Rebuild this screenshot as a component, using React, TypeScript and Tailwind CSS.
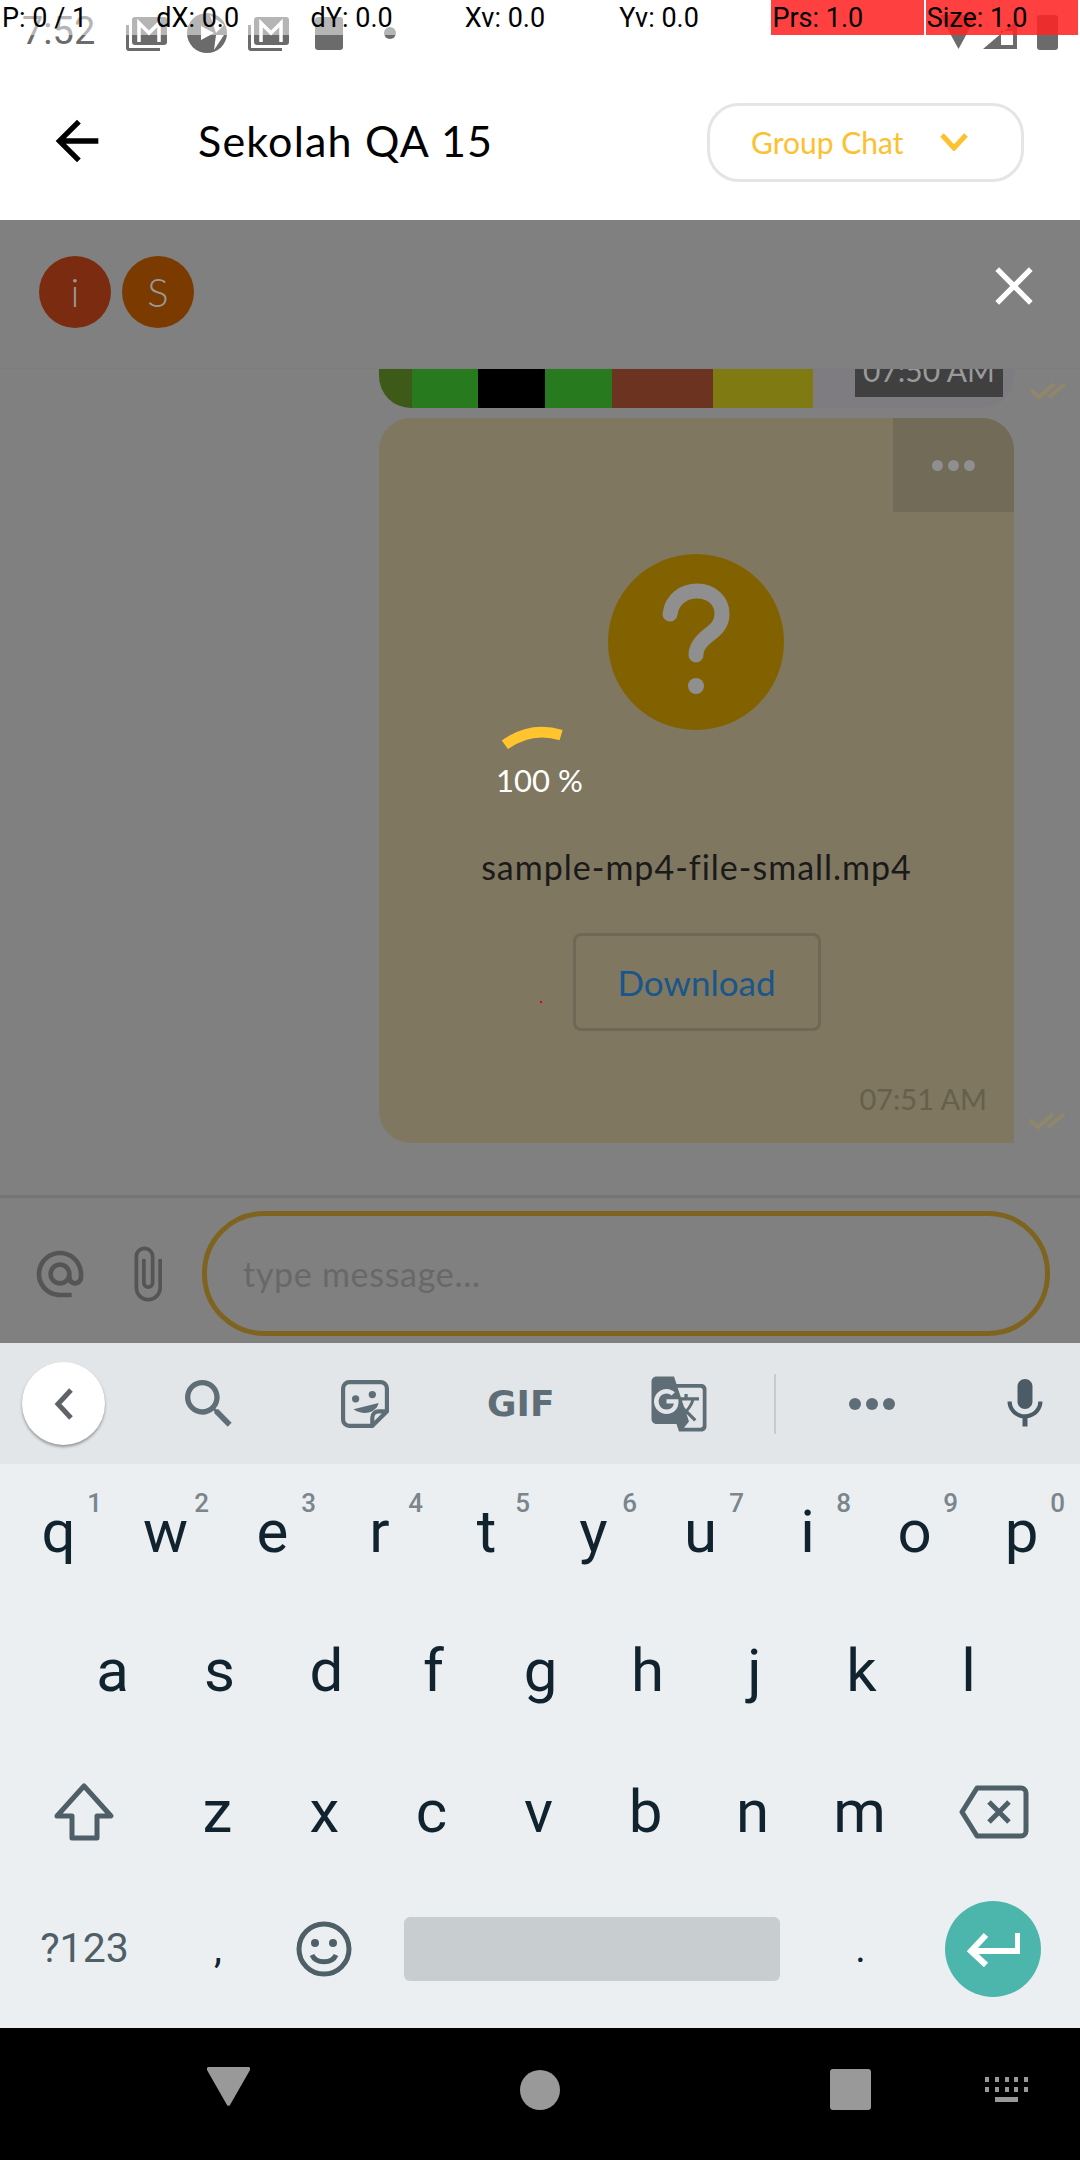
import { MdArrowBack, MdClose, MdSearch, MdMic, MdAlternateEmail, MdAttachFile, MdGTranslate } from 'react-icons/md';

const debugCols = ['P: 0 / 1', 'dX: 0.0', 'dY: 0.0', 'Xv: 0.0', 'Yv: 0.0', 'Prs: 1.0', 'Size: 1.0'];
const row1 = [['q', '1'], ['w', '2'], ['e', '3'], ['r', '4'], ['t', '5'], ['y', '6'], ['u', '7'], ['i', '8'], ['o', '9'], ['p', '0']];
const row2 = ['a', 's', 'd', 'f', 'g', 'h', 'j', 'k', 'l'];
const row3 = ['z', 'x', 'c', 'v', 'b', 'n', 'm'];

const MailIcon = () => (
  <svg width="41" height="34" viewBox="0 0 41 34" fill="#6b6b6b">
    <path d="M0 8h3v23h31v3H3a3 3 0 0 1-3-3z" />
    <path d="M9 0h29a3 3 0 0 1 3 3v22a3 3 0 0 1-3 3H9a3 3 0 0 1-3-3V3a3 3 0 0 1 3-3z" />
    <path d="M13 25V6l10 10L33 6v19" fill="none" stroke="#fff" strokeWidth="3.500" />
  </svg>
);

const Ticks = () => (
  <svg width="36" height="18" viewBox="0 0 36 18" fill="none" stroke="#90866a" strokeWidth="4">
    <path d="M1 8l8 7L24 2" />
    <path d="M19 15L35 2" />
  </svg>
);

function Key({ label, hint }: { label: string; hint?: string }) {
  return (
    <div className="relative w-[107px] h-full flex justify-center items-center text-[60px] text-[#10232f] font-[Roboto,sans-serif]">
      {label}
      {hint && <span className="absolute top-[26px] right-[10px] text-[26px] font-medium leading-none text-[#7a858c]">{hint}</span>}
    </div>
  );
}

export default function App() {
  return (
    <div className="relative w-[1080px] h-[2160px] overflow-hidden bg-white flex flex-col font-['Lato',sans-serif]">
      {/* pointer location debug overlay */}
      <div className="absolute top-0 left-0 w-full h-[35px] bg-white/50 grid grid-cols-7 z-10 font-[Roboto,sans-serif] text-[27px] leading-[37px] text-black">
        {debugCols.map((c, i) => (
          <div key={c} className={i > 4 ? 'h-[35px] bg-[#ff0000]/75 mr-[2px] pl-[1px]' : 'h-[35px] pl-[2px]'}>
            {c}
          </div>
        ))}
      </div>

      <div className="h-[62px] flex items-start pt-[13px] px-[22px] text-[#6b6b6b]">
        <span className="w-[104px] mt-[-2px] text-[38px] leading-[40px] font-[Roboto,sans-serif]">7:52</span>
        <div className="mt-[4px]"><MailIcon /></div>
        <svg className="ml-[19px]" width="42" height="40" viewBox="0 0 42 40" fill="#6b6b6b">
          <circle cx="21" cy="20" r="20" />
          <path d="M15 13l13 7-13 7z" fill="#fff" />
          <path d="M24 2l14 10-8 8z" fill="#fff" />
          <path d="M30 22l8 0-10 15z" fill="#fff" />
        </svg>
        <div className="ml-[20px] mt-[4px]"><MailIcon /></div>
        <div className="ml-[26px] mt-[4px] w-[28px] h-[33px] rounded-[3px] bg-[#6b6b6b]" />
        <div className="ml-[41px] mt-[14px] w-[12px] h-[12px] rounded-full bg-[#6b6b6b]" />
        <svg className="ml-auto mt-[2px]" width="37" height="34" viewBox="0 0 37 34" fill="#6b6b6b"><path d="M0 0h37L18.500 34z" /></svg>
        <svg className="ml-[6px] mt-[7px]" width="34" height="29" viewBox="0 0 34 29" fill="#6b6b6b"><path d="M34 0v29H0zM30 11l-12 0v14h12z" fillRule="evenodd" /></svg>
        <div className="ml-[20px] mt-[2px] w-[21px] h-[35px] rounded-[3px] bg-[#6b6b6b]" />
      </div>

      <header className="h-[158px] flex items-center pl-[45px] pr-[56px]">
        <MdArrowBack size={64} className="text-black" />
        <h1 className="ml-[89px] text-[43px] tracking-[1.2px] text-black">Sekolah QA 15</h1>
        <div className="ml-auto mt-[2px] w-[317px] h-[79px] rounded-[32px] border-[3px] border-[#e5e5e5] flex items-center pl-[41px] text-[30px] text-[#fdc02f]">
          Group Chat
          <svg className="ml-[37px]" width="28" height="18" viewBox="0 0 28 18" fill="none" stroke="#fdc02f" strokeWidth="5"><path d="M2 2l12 13L26 2" /></svg>
        </div>
      </header>

      <main className="flex-1 bg-[#808080] flex flex-col">
        <div className="h-[149px] flex items-start pt-[36px] pl-[39px] pr-[34px] border-b border-[#7d7d7d]">
          <div className="w-[72px] h-[72px] rounded-full bg-[#7b2b10] flex items-center justify-center text-[40px] font-light text-[#999]">i</div>
          <div className="ml-[11px] w-[72px] h-[72px] rounded-full bg-[#7a3a00] flex items-center justify-center text-[40px] font-light text-[#999]">S</div>
          <MdClose size={64} className="ml-auto mt-[-2px] text-white" />
        </div>

        <div className="flex-1 flex flex-col pl-[379px]">
          <div className="flex items-center">
            <div className="w-[635px] h-[39px] flex rounded-b-[32px] overflow-hidden bg-[#7e7c80]">
              <div className="w-[33px] bg-[#3e5a18]" />
              <div className="w-[66px] bg-[#287a1e]" />
              <div className="w-[67px] bg-black" />
              <div className="w-[67px] bg-[#287a1e]" />
              <div className="w-[101px] bg-[#6c3420]" />
              <div className="w-[100px] bg-[#807a12]" />
              <div className="ml-[42px] w-[148px] h-[28px] bg-[#404040] flex items-end justify-center text-[#9a9a9a] text-[30px] leading-none pb-[12px] whitespace-nowrap">07:50 AM</div>
            </div>
            <div className="ml-[16px] mt-[4px]"><Ticks /></div>
          </div>

          <div className="flex items-end mt-[10px]">
            <div className="relative w-[635px] h-[725px] rounded-[32px] rounded-br-none bg-[#7f7760] flex flex-col items-center">
              <div className="absolute top-0 right-0 w-[121px] h-[94px] rounded-tr-[32px] bg-[#716b58] flex items-center justify-center gap-[5px]">
                <span className="w-[11px] h-[11px] rounded-full bg-[#8f8f8f]" />
                <span className="w-[11px] h-[11px] rounded-full bg-[#8f8f8f]" />
                <span className="w-[11px] h-[11px] rounded-full bg-[#8f8f8f]" />
              </div>
              <div className="mt-[136px] mr-[2px] w-[176px] h-[176px] rounded-full bg-[#826200]">
                <svg width="176" height="176" viewBox="0 0 176 176" fill="none" stroke="#8f8f8f" strokeWidth="15" strokeLinecap="round">
                  <path d="M62 60C64 45 76 37 89 37c15 0 25 10 25 23 0 14-11 18-19 26-5 5-7 9-7 15" />
                  <circle cx="88" cy="132" r="8" fill="#8f8f8f" strokeWidth="0" />
                </svg>
              </div>
              {/* upload progress on top of the card */}
              <svg className="absolute left-[122px] top-[304px]" width="64" height="30" viewBox="0 0 66 30" fill="none" stroke="#ffc42e" strokeWidth="11">
                <path d="M4 23C22 10 42 7 62 13" />
              </svg>
              <span className="absolute left-[117px] top-[344px] text-[31px] leading-[36px] text-white">100 %</span>
              <p className="mt-[117px] text-[34px] tracking-[1px] leading-[40px] text-[#1a1a1a]">sample-mp4-file-small.mp4</p>
              <div className="mt-[46px] w-[248px] h-[98px] rounded-[8px] border-[3px] border-[#6e6854] flex items-center justify-center text-[35px] text-[#19568a]">Download</div>
              <span className="absolute right-[27px] bottom-[26px] text-[29px] leading-[36px] text-[#655f4b]">07:51 AM</span>
              <span className="absolute left-[161px] top-[583px] w-[2px] h-[2px] bg-red-600" />
            </div>
            <div className="ml-[15px] mb-[13px]"><Ticks /></div>
          </div>
        </div>

        <div className="h-[148px] border-t-[3px] border-[#757575] flex items-center pt-[6px] pl-[32px] pr-[30px]">
          <MdAlternateEmail size={56} className="text-[#555]" />
          <MdAttachFile size={60} className="ml-[29px] text-[#555]" />
          <div className="ml-[25px] flex-1 h-[125px] rounded-[62px] border-[5px] border-[#7f6420] flex items-center pl-[36px] text-[34px] tracking-[0.7px] text-[#686868]">type message...</div>
        </div>
      </main>

      <section className="bg-[#ebeff2] font-[Roboto,sans-serif]">
        <div className="h-[121px] bg-[#e2e6e9] flex items-center pl-[22px]">
          <div className="w-[83px] h-[83px] rounded-full bg-white shadow-[0_2px_3px_rgba(0,0,0,0.35)] flex items-center justify-center">
            <svg width="20" height="34" viewBox="0 0 20 34" fill="none" stroke="#5f6368" strokeWidth="5"><path d="M17 3L4 17l13 14" /></svg>
          </div>
          <MdSearch size={64} className="ml-[72px] text-[#5f6e76]" />
          <svg className="ml-[100px]" width="48" height="48" viewBox="0 0 46 46" fill="none" stroke="#5f6e76" strokeWidth="4">
            <path d="M8 2h30a6 6 0 0 1 6 6v22L30 44H8a6 6 0 0 1-6-6V8a6 6 0 0 1 6-6z" />
            <path d="M44 30h-8a6 6 0 0 0-6 6v8" />
            <circle cx="14" cy="18" r="3.500" fill="#5f6e76" stroke="none" />
            <circle cx="30" cy="14" r="3.500" fill="#5f6e76" stroke="none" />
            <path d="M12 28l24-6c-2 9-14 13-24 6z" fill="#5f6e76" stroke="none" />
          </svg>
          <span className="ml-[98px] w-[68px] text-[36px] font-[DejaVu_Sans,sans-serif] font-bold leading-none text-[#5f6e76]">GIF</span>
          <MdGTranslate size={60} className="ml-[94px] text-[#5f6e76]" />
          <div className="ml-[65px] w-[2px] h-[60px] bg-[#c6cbcf]" />
          <div className="ml-[73px] flex gap-[5px]">
            <span className="w-[12px] h-[12px] rounded-full bg-[#5f6e76]" />
            <span className="w-[12px] h-[12px] rounded-full bg-[#5f6e76]" />
            <span className="w-[12px] h-[12px] rounded-full bg-[#5f6e76]" />
          </div>
          <MdMic size={60} className="ml-[100px] text-[#4c5c66]" />
        </div>

        <div className="h-[141px] flex pl-[5px] pb-[5px]">
          {row1.map(([l, h]) => <Key key={l} label={l} hint={h} />)}
        </div>
        <div className="h-[141px] flex pl-[59px] pb-[10px]">
          {row2.map((l) => <Key key={l} label={l} />)}
        </div>
        <div className="h-[141px] flex items-center pb-[10px]">
          <div className="w-[164px] pl-[4px] flex justify-center">
            <svg width="62" height="60" viewBox="0 0 62 60" fill="none" stroke="#4f5f68" strokeWidth="5" strokeLinejoin="round">
              <path d="M31 4l27 30H44v22H19V34H4z" />
            </svg>
          </div>
          {row3.map((l) => <Key key={l} label={l} />)}
          <div className="ml-[27px] w-[107px] flex justify-center">
            <svg width="70" height="54" viewBox="0 0 70 54" fill="none" stroke="#4f5f68" strokeWidth="5" strokeLinejoin="round">
              <path d="M18 3h44a5 5 0 0 1 5 5v38a5 5 0 0 1-5 5H18L3 27z" />
              <path d="M30 17l20 20M50 17L30 37" />
            </svg>
          </div>
        </div>
        <div className="h-[141px] flex items-center pb-[17px]">
          <div className="w-[166px] pl-[3px] text-center text-[41px] text-[#4f5f68]">?123</div>
          <div className="w-[104px] text-center text-[40px] text-[#10232f]">,</div>
          <div className="w-[107px] flex justify-center">
            <svg width="56" height="56" viewBox="0 0 56 56" fill="none" stroke="#4f5f68" strokeWidth="5">
              <circle cx="28" cy="28" r="25" />
              <circle cx="19" cy="22" r="4" fill="#4f5f68" stroke="none" />
              <circle cx="37" cy="22" r="4" fill="#4f5f68" stroke="none" />
              <path d="M16 34c4 9 20 9 24 0" />
            </svg>
          </div>
          <div className="ml-[27px] w-[376px] h-[64px] rounded-[6px] bg-[#c8cdd0]" />
          <div className="ml-[27px] w-[107px] text-center text-[40px] text-[#10232f]">.</div>
          <div className="ml-[31px] w-[96px] h-[96px] rounded-full bg-[#4db6ac] flex items-center justify-center">
            <svg width="54" height="36" viewBox="0 0 54 36" fill="none" stroke="#fff" strokeWidth="6"><path d="M52 2v18H6M20 4L5 20l15 14" /></svg>
          </div>
        </div>
      </section>

      <nav className="h-[132px] bg-black flex items-center">
        <svg className="ml-[207px] mt-[-15px]" width="43" height="39" viewBox="0 0 43 39" fill="#999"><path d="M2 0h39a2 2 0 0 1 2 3L23 38a2 2 0 0 1-3 0L0 3a2 2 0 0 1 2-3z" /></svg>
        <div className="ml-[270px] mt-[-9px] w-[40px] h-[40px] rounded-full bg-[#999]" />
        <div className="ml-[270px] mt-[-9px] w-[41px] h-[41px] rounded-[3px] bg-[#999]" />
        <div className="ml-[114px] mt-[-9px] w-[43px] flex flex-col items-center gap-[5px]">
          <div className="w-full h-[5px] bg-[repeating-linear-gradient(90deg,#999_0_4px,transparent_4px_9.800px)]" />
          <div className="w-full h-[5px] bg-[repeating-linear-gradient(90deg,#999_0_4px,transparent_4px_9.800px)]" />
          <div className="w-[23px] h-[5px] bg-[#999]" />
        </div>
      </nav>
    </div>
  );
}
